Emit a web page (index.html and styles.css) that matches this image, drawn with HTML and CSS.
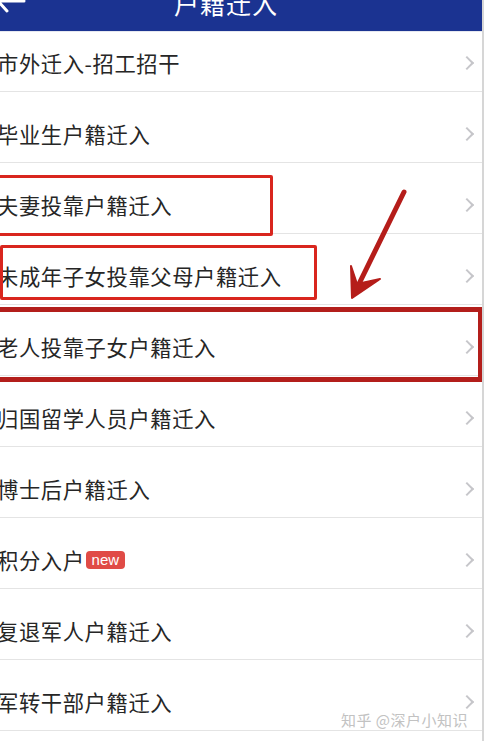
FILE: index.html
```html
<!DOCTYPE html>
<html lang="zh-CN">
<head>
  <meta charset="UTF-8">
  <meta name="viewport" content="width=device-width, initial-scale=1.0">
  <title>户籍迁入</title>
  <link rel="stylesheet" href="styles.css">
</head>
<body>
<div class="page">
  <div class="header">
    <svg class="back" width="26" height="16" viewBox="0 0 26 16">
      <path d="M24 1 H-2 M-2 1 L7 11" fill="none" stroke="#fff" stroke-width="3" stroke-linecap="round"/>
    </svg>
    <h1>户籍迁入</h1>
  </div>

  <ul class="list">
    <li><span>市外迁入-招工招干</span><i class="chev"></i></li>
    <li><span>毕业生户籍迁入</span><i class="chev"></i></li>
    <li><span>夫妻投靠户籍迁入</span><i class="chev"></i></li>
    <li><span>未成年子女投靠父母户籍迁入</span><i class="chev"></i></li>
    <li><span>老人投靠子女户籍迁入</span><i class="chev"></i></li>
    <li><span>归国留学人员户籍迁入</span><i class="chev"></i></li>
    <li><span>博士后户籍迁入</span><i class="chev"></i></li>
    <li><span>积分入户<em class="badge">new</em></span><i class="chev"></i></li>
    <li><span>复退军人户籍迁入</span><i class="chev"></i></li>
    <li><span>军转干部户籍迁入</span><i class="chev"></i></li>
  </ul>

  <!-- 标注 -->
  <div class="mark mark-1"></div>
  <div class="mark mark-2"></div>
  <div class="mark mark-3"></div>
  <svg class="arrow" width="484" height="741" viewBox="0 0 484 741">
    <path d="M404 192 L356 290" fill="none" stroke="#b51d1a" stroke-width="5" stroke-linecap="round"/>
    <path d="M352 298 L351 266 L357 284 L380 279 Z" fill="#b51d1a" stroke="#b51d1a" stroke-width="2" stroke-linejoin="round"/>
  </svg>

  <div class="watermark">知乎 @深户小知识</div>
</div>
</body>
</html>
```

FILE: styles.css
```css
body {
  margin: 0;
  font-family: "Noto Sans CJK SC", "Noto Sans", sans-serif;
  background-color: #ffffff;
  color: #222;
}
.page {
  position: relative;
  width: 484px;
  height: 741px;
  overflow: hidden;
  border-right: 2px solid #d6d6d6;
  box-sizing: border-box;
}
.header {
  position: relative;
  height: 31px;
  background-color: #1b3391;
  overflow: hidden;
  border-bottom: 1px solid #e6e8f0;
  padding-right: 30px;
}
.header h1 {
  margin: -12px 0 0;
  font-size: 25px;
  font-weight: normal;
  line-height: 30px;
  color: #fff;
  text-align: center;
  letter-spacing: 1px;
}
.back {
  position: absolute;
  left: 0;
  top: 0;
}
.list {
  list-style: none;
  margin: 0;
  padding: 0;
}
.list li {
  display: flex;
  align-items: center;
  justify-content: space-between;
  box-sizing: border-box;
  height: 71px;
  padding: 13px 0 0;
  border-bottom: 1px solid #e4e4e4;
}
.list li:first-child {
  height: 60px;
  padding-top: 2px;
}
.list li span {
  display: flex;
  align-items: center;
  margin-left: -3px;
  font-size: 21.3px;
  letter-spacing: 0.6px;
  color: #262626;
}
.badge {
  margin-left: 1px;
  padding: 0 6px;
  height: 18px;
  line-height: 17px;
  border-radius: 4px;
  background-color: #e04b46;
  color: #fff;
  font-family: "Liberation Sans", Arial, sans-serif;
  font-style: normal;
  font-size: 15px;
  letter-spacing: 0;
}
.chev {
  width: 8px;
  height: 8px;
  margin-right: 10px;
  border-top: 2px solid #c6c6ca;
  border-right: 2px solid #c6c6ca;
  transform: rotate(45deg);
}
.mark {
  position: absolute;
  box-sizing: border-box;
}
.mark-1 {
  left: -6px;
  top: 175px;
  width: 279px;
  height: 61px;
  border: 3px solid #d9261e;
  border-radius: 2px;
}
.mark-2 {
  left: 0;
  top: 245px;
  width: 317px;
  height: 55px;
  border: 3px solid #d9261e;
  border-radius: 2px;
}
.mark-3 {
  left: -6px;
  top: 307px;
  width: 489px;
  height: 75px;
  border: 5px solid #b31e1b;
}
.arrow {
  position: absolute;
  left: 0;
  top: 0;
}
.watermark {
  position: absolute;
  right: 14px;
  top: 709px;
  font-size: 15px;
  letter-spacing: 0.5px;
  color: #c2c2c2;
  text-shadow: 0 0 2px #fff;
}
```
